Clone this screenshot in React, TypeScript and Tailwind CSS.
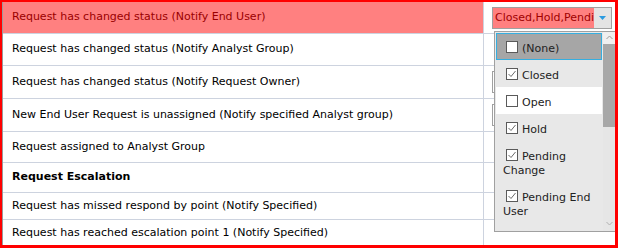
import React from "react";

const rows = [
  { text: "Request has changed status (Notify End User)", h: "h-[32px]", active: true },
  { text: "Request has changed status (Notify Analyst Group)", h: "h-[32px]" },
  { text: "Request has changed status (Notify Request Owner)", h: "h-[33px]", combo: true },
  { text: "New End User Request is unassigned (Notify specified Analyst group)", h: "h-[33px]", combo: true },
  { text: "Request assigned to Analyst Group", h: "h-[31px]" },
  { text: "Request Escalation", h: "h-[30px]", bold: true },
  { text: "Request has missed respond by point (Notify Specified)", h: "h-[27px]" },
  { text: "Request has reached escalation point 1 (Notify Specified)", h: "h-[27px]" },
];

const options = [
  { label: "(None)", checked: false, bg: "bg-[#a6a6a6] border border-[#35aee0]" },
  { label: "Closed", checked: true, bg: "bg-[#e8e8e8] border border-transparent" },
  { label: "Open", checked: false, bg: "bg-white border border-transparent" },
  { label: "Hold", checked: true, bg: "bg-[#e8e8e8] border border-transparent" },
  { label: "Pending Change", checked: true, bg: "bg-[#e8e8e8] border border-transparent" },
  { label: "Pending End User", checked: true, bg: "bg-[#e8e8e8] border border-transparent" },
  { label: "Resolved", checked: false, bg: "bg-[#e8e8e8] border border-transparent" },
];

function Check({ checked }: { checked: boolean }) {
  return (
    <span className="mr-[4px] ml-[3px] inline-block h-[12px] w-[12px] border border-[#5a5a5a] bg-white align-[-1px]">
      {checked && (
        <svg width="10" height="10" viewBox="0 0 10 10" className="block">
          <path d="M1.5 5 L4 7.5 L8.5 2" fill="none" stroke="#6a6a6a" strokeWidth="1" />
        </svg>
      )}
    </span>
  );
}

function StatusList() {
  return (
    <div className="absolute left-[2px] top-[24px] z-10 flex h-[201px] w-[122px] border border-[#a0a0a0] bg-[#e8e8e8]">
      <div className="flex-1 overflow-hidden p-px">
        {options.map((o) => (
          <div
            key={o.label}
            className={`${o.bg} px-[6px] pt-[7px] pb-[3px] text-[11px] leading-[14px] text-[#222]`}
          >
            <Check checked={o.checked} />
            {o.label}
          </div>
        ))}
      </div>
      <div className="flex w-[12px] flex-col bg-[#e6e6e6]">
        <div className="flex h-[12px] items-center justify-center bg-[#f0f0f0]">
          <svg width="7" height="5" viewBox="0 0 7 5">
            <path d="M0.5 4 L3.5 1 L6.5 4" fill="none" stroke="#9a9a9a" strokeWidth="1" />
          </svg>
        </div>
        <div className="h-[83px] bg-[#a8a8a8]" />
        <div className="flex-1" />
        <div className="flex h-[14px] items-center justify-center">
          <svg width="7" height="5" viewBox="0 0 7 5">
            <path d="M0.5 1 L3.5 4 L6.5 1" fill="none" stroke="#b0b0b0" strokeWidth="1" />
          </svg>
        </div>
      </div>
    </div>
  );
}

function Combo({ open }: { open?: boolean }) {
  return (
    <div className="relative">
      <div className="flex h-[22px] w-[120px] border border-[#a0a0a0] bg-white">
        {open && (
          <>
            <div className="flex-1 overflow-hidden whitespace-nowrap bg-[#ff8080] pl-[2px] text-[11px] leading-[20px] text-[#a00000]">
              Closed,Hold,Pending Change,Pending End User
            </div>
            <div className="flex w-[17px] items-center justify-center bg-[#e4e4e4]">
              <svg width="7" height="4" viewBox="0 0 7 4">
                <path d="M0 0 L7 0 L3.5 4 Z" fill="#2a9be0" />
              </svg>
            </div>
          </>
        )}
      </div>
      {open && <StatusList />}
    </div>
  );
}

export default function App() {
  return (
    <div className="h-[250px] w-[620px] bg-white" style={{ fontFamily: '"DejaVu Sans", Verdana, sans-serif' }}>
      <div className="relative h-[248px] w-[618px] overflow-hidden border-t-2 border-r-[3px] border-b-[3px] border-l-2 border-[#ff0000]">
        <div className="h-full border-l border-[#9a9a9a]">
          {rows.map((r) => (
            <div key={r.text} className={`flex ${r.h} border-b border-[#cdd3df]`}>
              <div
                className={`flex w-[481px] shrink-0 items-center border-r border-[#cdd3df] pl-[9px] text-[11px] ${
                  r.active ? "bg-[#ff8080] text-[#9a0000]" : "text-black"
                } ${r.bold ? "font-bold" : ""}`}
              >
                {r.text}
              </div>
              <div className={`flex flex-1 items-center pl-[8px] ${r.active ? "relative z-10" : ""}`}>
                {(r.active || r.combo) && <Combo open={r.active} />}
              </div>
            </div>
          ))}
        </div>
      </div>
    </div>
  );
}
